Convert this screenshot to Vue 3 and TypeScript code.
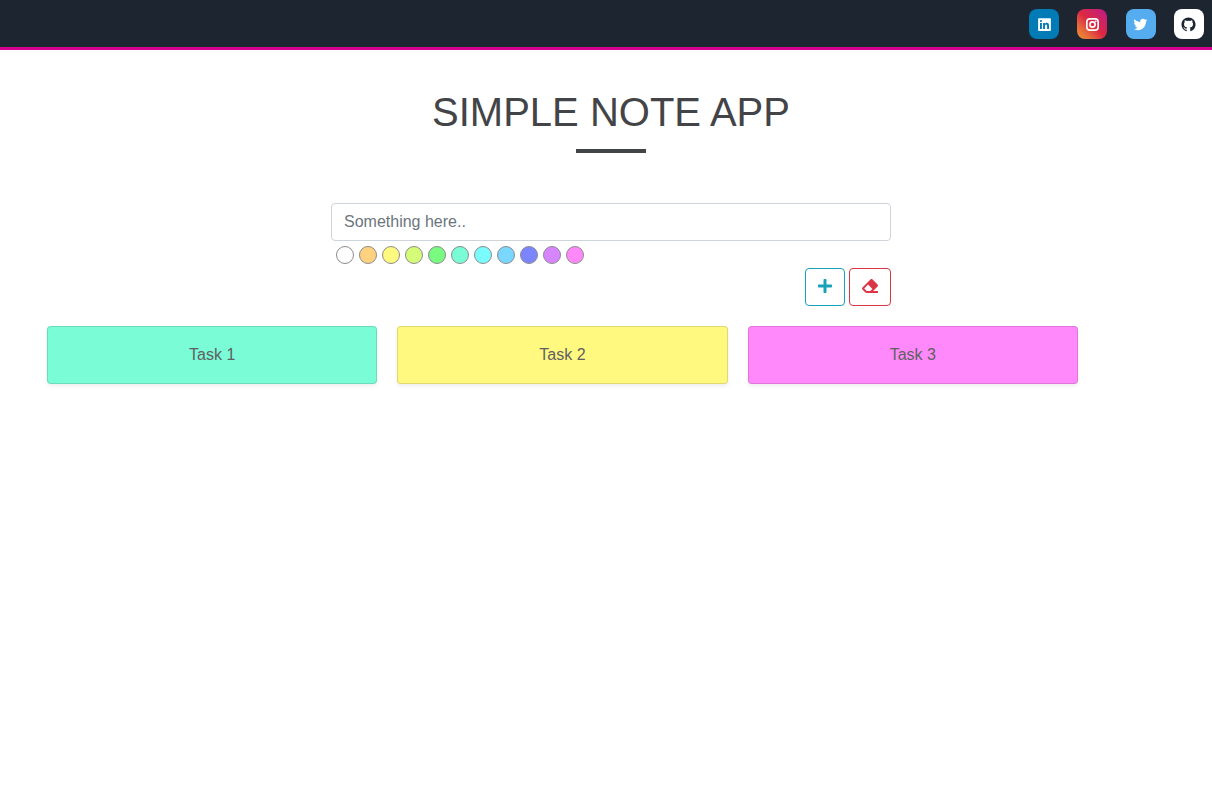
<script setup lang="ts">
import { ref } from 'vue'

interface Note {
  text: string
  color: string
}

const colors: { name: string; value: string }[] = [
  { name: 'White', value: '#ffffff' },
  { name: 'Orange', value: '#ffd280' },
  { name: 'Yellow', value: '#fff980' },
  { name: 'Lime', value: '#d4fc79' },
  { name: 'Green', value: '#79fa80' },
  { name: 'Mint', value: '#7afcd6' },
  { name: 'Cyan', value: '#7afcff' },
  { name: 'Sky', value: '#7ad7ff' },
  { name: 'Blue', value: '#7a85ff' },
  { name: 'Purple', value: '#d685ff' },
  { name: 'Pink', value: '#ff89fb' },
]

const draft = ref('')
const selected = ref('')
const notes = ref<Note[]>([
  { text: 'Task 1', color: '#7afcd6' },
  { text: 'Task 2', color: '#fff980' },
  { text: 'Task 3', color: '#ff89fb' },
])

function addNote() {
  const text = draft.value.trim()
  if (!text) return
  notes.value.push({ text, color: selected.value || '#ffffff' })
  draft.value = ''
}

function clearDraft() {
  draft.value = ''
  selected.value = ''
}
</script>

<template>
  <header class="navbar">
    <nav class="social" aria-label="Social links">
      <a class="social-link linkedin" href="#" aria-label="LinkedIn">
        <svg viewBox="0 0 24 24"><path d="M20 3H4a1 1 0 0 0-1 1v16a1 1 0 0 0 1 1h16a1 1 0 0 0 1-1V4a1 1 0 0 0-1-1zM8.339 18.337H5.667v-8.59h2.672v8.59zM7.003 8.574a1.548 1.548 0 1 1 0-3.096 1.548 1.548 0 0 1 0 3.096zm11.335 9.763h-2.669V14.16c0-.996-.018-2.277-1.388-2.277-1.39 0-1.601 1.086-1.601 2.207v4.248h-2.667v-8.59h2.56v1.174h.037c.355-.675 1.227-1.387 2.524-1.387 2.704 0 3.203 1.778 3.203 4.092v4.71z" /></svg>
      </a>
      <a class="social-link instagram" href="#" aria-label="Instagram">
        <svg viewBox="0 0 24 24">
          <rect x="4" y="4" width="16" height="16" rx="4.4" fill="none" stroke="currentColor" stroke-width="2.3" />
          <circle cx="12" cy="12" r="3.7" fill="none" stroke="currentColor" stroke-width="2.3" />
          <circle cx="16.6" cy="7.4" r="1.2" />
        </svg>
      </a>
      <a class="social-link twitter" href="#" aria-label="Twitter">
        <svg viewBox="0 0 24 24"><path d="M19.633 7.997c.013.175.013.349.013.523 0 5.325-4.053 11.461-11.46 11.461-2.282 0-4.402-.661-6.186-1.809.324.037.636.05.973.05a8.07 8.07 0 0 0 5.001-1.721 4.036 4.036 0 0 1-3.767-2.793c.249.037.499.062.761.062.361 0 .724-.05 1.061-.137a4.027 4.027 0 0 1-3.23-3.953v-.05c.537.299 1.16.486 1.82.511a4.022 4.022 0 0 1-1.796-3.354c0-.748.199-1.434.548-2.032a11.457 11.457 0 0 0 8.306 4.215c-.062-.3-.1-.611-.1-.923a4.026 4.026 0 0 1 4.028-4.028c1.16 0 2.207.486 2.943 1.272a7.957 7.957 0 0 0 2.556-.973 4.02 4.02 0 0 1-1.771 2.22 8.073 8.073 0 0 0 2.319-.624 8.645 8.645 0 0 1-2.019 2.083z" /></svg>
      </a>
      <a class="social-link github" href="#" aria-label="GitHub">
        <svg viewBox="0 0 24 24"><path d="M12.026 2c-5.509 0-9.974 4.465-9.974 9.974 0 4.406 2.857 8.145 6.821 9.465.499.09.679-.217.679-.481 0-.237-.008-.865-.011-1.696-2.775.602-3.361-1.338-3.361-1.338-.452-1.152-1.107-1.459-1.107-1.459-.905-.619.069-.605.069-.605 1.002.07 1.527 1.028 1.527 1.028.89 1.524 2.336 1.084 2.902.829.091-.645.351-1.085.635-1.334-2.214-.251-4.542-1.107-4.542-4.93 0-1.087.389-1.979 1.024-2.675-.101-.253-.446-1.268.099-2.64 0 0 .837-.269 2.742 1.021a9.582 9.582 0 0 1 2.496-.336 9.554 9.554 0 0 1 2.496.336c1.906-1.291 2.742-1.021 2.742-1.021.545 1.372.203 2.387.099 2.64.64.696 1.024 1.587 1.024 2.675 0 3.833-2.33 4.675-4.552 4.922.355.308.675.916.675 1.846 0 1.334-.012 2.41-.012 2.737 0 .267.178.577.687.479C19.146 20.115 22 16.379 22 11.974 22 6.465 17.535 2 12.026 2z" /></svg>
      </a>
    </nav>
  </header>

  <main class="page">
    <h1 class="title">SIMPLE NOTE APP</h1>

    <form class="note-form" @submit.prevent="addNote">
      <input v-model="draft" class="note-input" type="text" placeholder="Something here.." aria-label="Note text" />
      <div class="swatches" role="radiogroup" aria-label="Note color">
        <input
          v-for="c in colors"
          :key="c.name"
          v-model="selected"
          class="swatch"
          type="radio"
          name="color"
          :value="c.value"
          :aria-label="c.name"
          :style="{ backgroundColor: c.value }"
        />
      </div>
      <div class="actions">
        <button class="btn add" type="submit" aria-label="Add note">
          <svg class="icon-plus" viewBox="0 0 448 512"><path d="M416 208H272V64c0-17.67-14.33-32-32-32h-32c-17.67 0-32 14.33-32 32v144H32c-17.67 0-32 14.33-32 32v32c0 17.67 14.33 32 32 32h144v144c0 17.67 14.33 32 32 32h32c17.67 0 32-14.33 32-32V304h144c17.67 0 32-14.33 32-32v-32c0-17.67-14.33-32-32-32z" /></svg>
        </button>
        <button class="btn erase" type="button" aria-label="Clear" @click="clearDraft">
          <svg class="icon-eraser" viewBox="0 0 512 512"><path d="M497.941 273.941c18.745-18.745 18.745-49.137 0-67.882l-160-160c-18.745-18.745-49.136-18.746-67.883 0l-256 256c-18.745 18.745-18.745 49.137 0 67.882l96 96A48.004 48.004 0 0 0 144 480h356c6.627 0 12-5.373 12-12v-40c0-6.627-5.373-12-12-12H355.883l142.058-142.059zm-302.627-62.627l137.373 137.373L265.373 416H150.628l-80-80 124.686-124.686z" /></svg>
        </button>
      </div>
    </form>

    <section class="notes" aria-label="Notes">
      <article v-for="(note, i) in notes" :key="i" class="note" :style="{ backgroundColor: note.color }">
        {{ note.text }}
      </article>
    </section>
  </main>
</template>

<style>
body {
  margin: 0;
  background: #fff;
  color: #434447;
  font-family: "Liberation Sans", Arial, sans-serif;
  font-size: 16px;
  line-height: 24px;
}
</style>

<style scoped>
* {
  box-sizing: border-box;
}

svg {
  display: block;
  fill: currentColor;
}

.navbar {
  display: flex;
  justify-content: flex-end;
  padding: 9px 8px 8px;
  background: #1d2530;
  border-bottom: 3px solid #d6008f;
}

.social {
  display: flex;
  justify-content: space-between;
  width: 175px;
}

.social-link {
  display: flex;
  align-items: center;
  justify-content: center;
  width: 30px;
  height: 30px;
  border-radius: 8px;
  color: #fff;
}

.social-link svg {
  width: 17px;
  height: 17px;
}

.linkedin {
  background: #007bb6;
}

.instagram {
  background: linear-gradient(45deg, #f09433 0%, #e6683c 25%, #dc2743 50%, #cc2366 75%, #bc1888 100%);
}

.twitter {
  background: #55acee;
}

.github {
  background: #fff;
  color: #1d2530;
}

.page {
  padding: 38px 0 0 10px;
}

.title {
  display: flex;
  flex-direction: column;
  align-items: center;
  gap: 13px;
  margin: 0 0 50px;
  font-size: 40px;
  font-weight: 400;
  line-height: 48px;
}

.title::after {
  content: "";
  width: 70px;
  height: 4px;
  background: #434447;
}

.note-form {
  max-width: 560px;
  margin: 0 auto;
}

.note-input {
  display: block;
  width: 100%;
  height: 38px;
  padding: 6px 12px;
  border: 1px solid #ced4da;
  border-radius: 4px;
  background: #fff;
  color: #495057;
  font: inherit;
}

.note-input::placeholder {
  color: #6c757d;
  opacity: 1;
}

.swatches {
  display: flex;
  gap: 5px;
  padding: 5px 5px 4px;
}

.swatch {
  appearance: none;
  width: 18px;
  height: 18px;
  margin: 0;
  border: 1px solid #8c8c8c;
  border-radius: 50%;
  cursor: pointer;
}

.swatch:checked {
  box-shadow: 0 0 0 2px #ced4da;
}

.actions {
  display: flex;
  justify-content: flex-end;
  gap: 4px;
}

.btn {
  display: flex;
  align-items: center;
  height: 38px;
  padding: 0 12px 2px;
  border: 1px solid currentColor;
  border-radius: 4px;
  background: transparent;
  cursor: pointer;
}

.add {
  color: #17a2b8;
}

.erase {
  color: #dc3545;
}

.icon-plus {
  width: 14px;
  height: 16px;
}

.icon-eraser {
  width: 16px;
  height: 16px;
}

.notes {
  display: grid;
  grid-template-columns: repeat(3, 1fr);
  gap: 20px;
  padding: 20px 134px 20px 37px;
}

.note {
  padding: 16px;
  border: 1px solid rgba(0, 0, 0, 0.125);
  border-radius: 4px;
  box-shadow: 0 2px 4px rgba(0, 0, 0, 0.075);
  color: #5f6062;
  text-align: center;
}
</style>
